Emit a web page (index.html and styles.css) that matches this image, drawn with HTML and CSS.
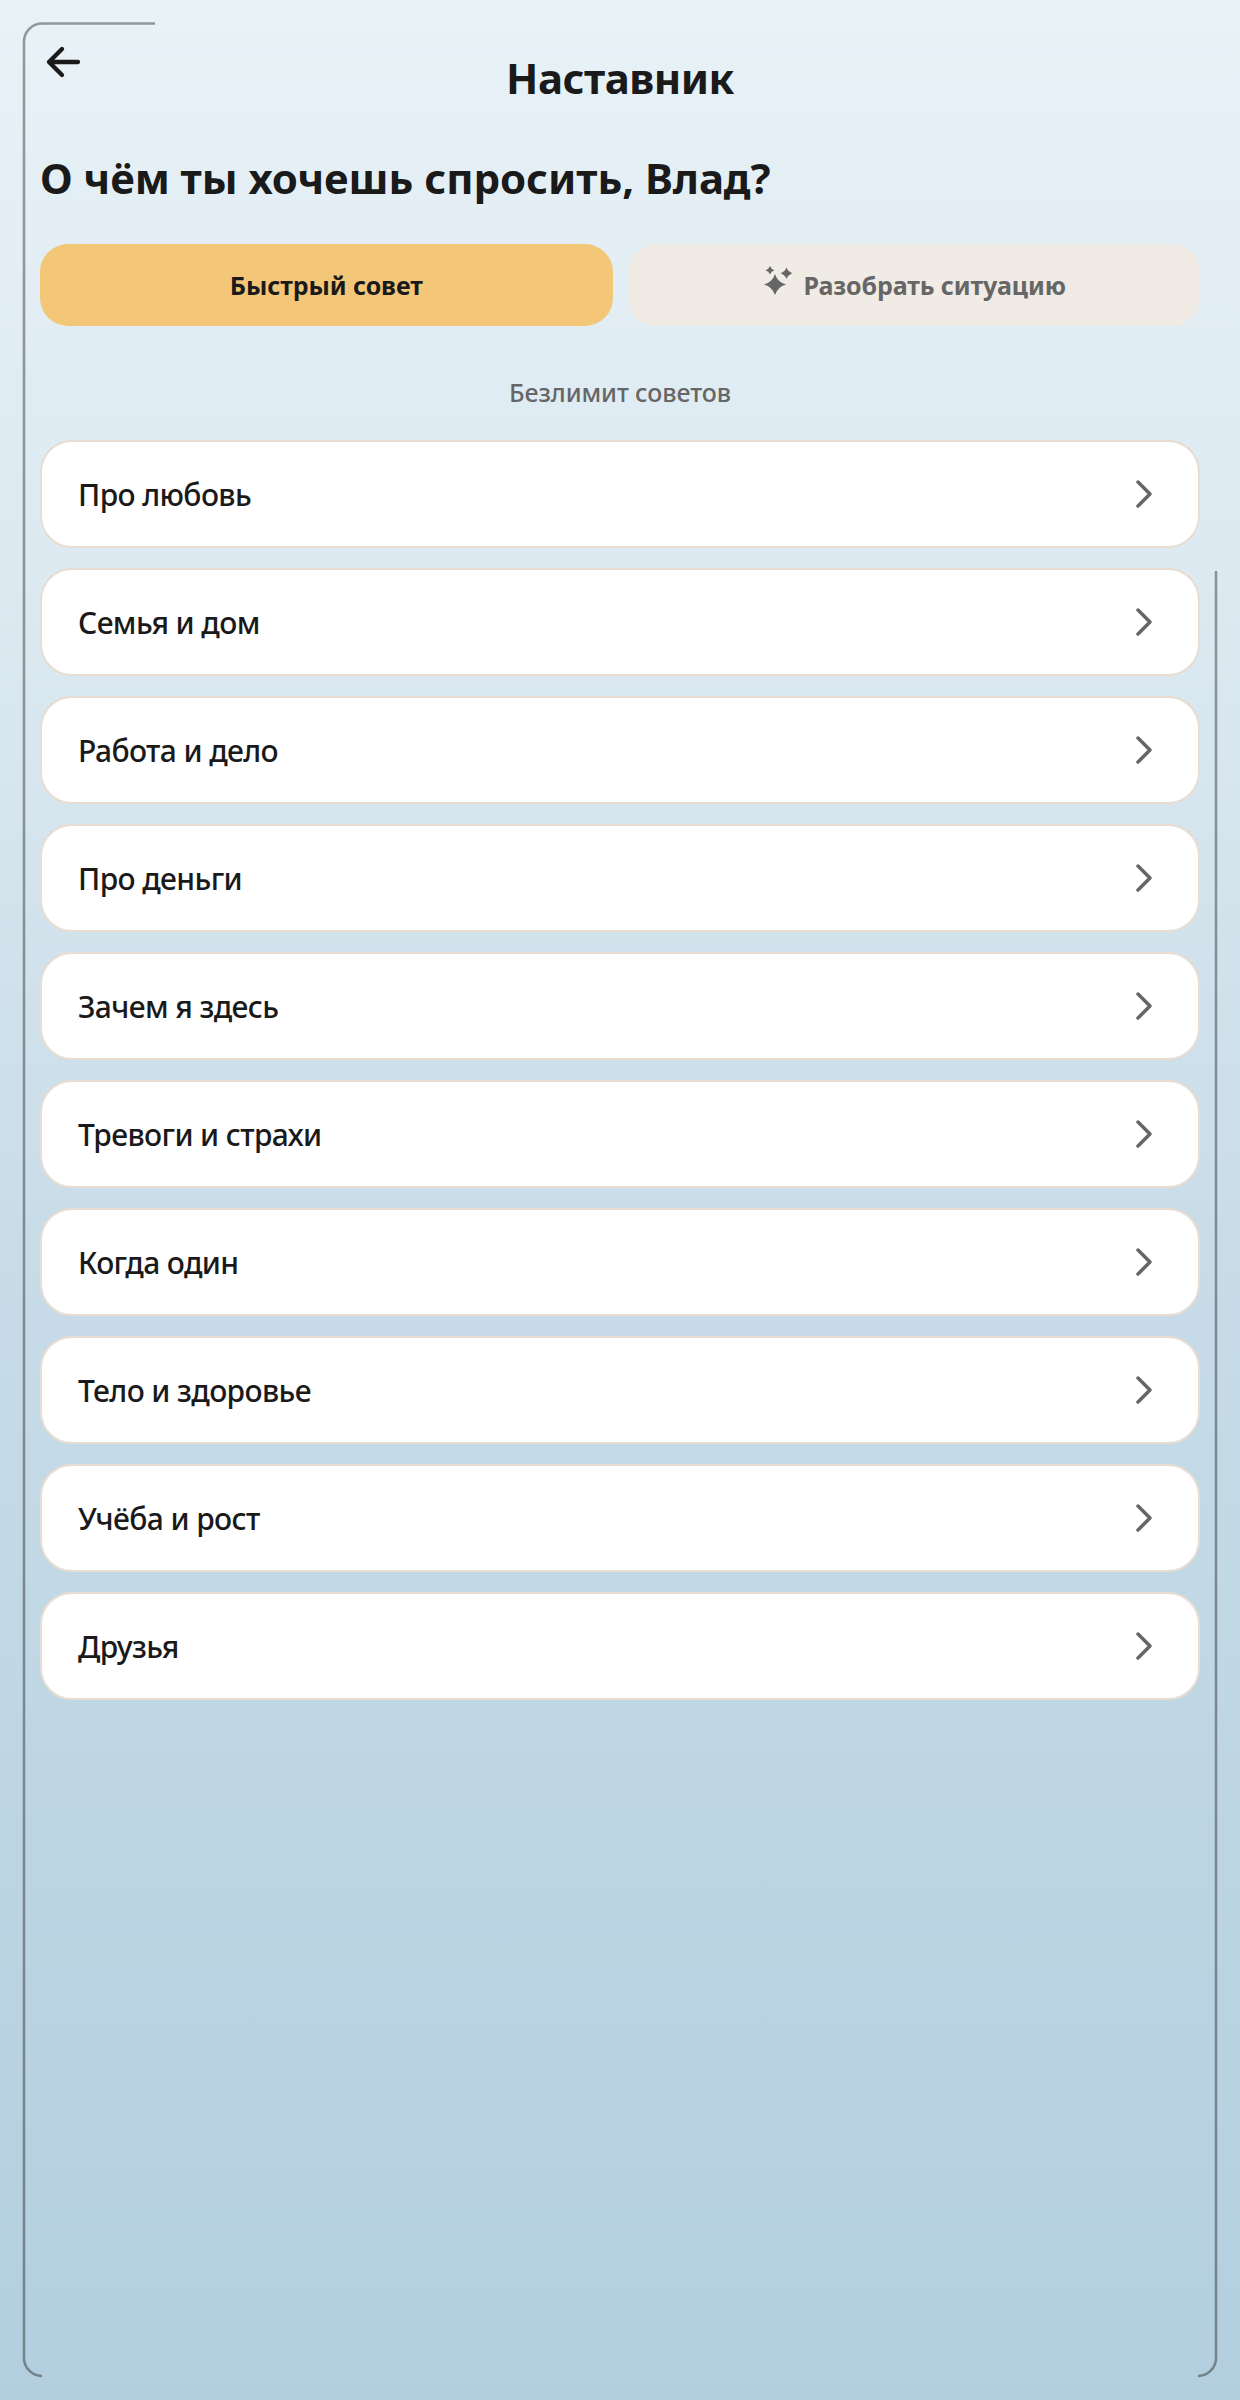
FILE: index.html
```html
<!DOCTYPE html>
<html lang="ru">
<head>
<meta charset="utf-8">
<title>Наставник</title>
<link rel="stylesheet" href="styles.css">
</head>
<body>
<svg class="frame" width="1240" height="2400" viewBox="0 0 1240 2400" fill="none">
  <path d="M155 23.500H42A18 18 0 0 0 24 41.500V2358A18 18 0 0 0 42 2376" stroke="#1a1a1a" stroke-opacity=".42" stroke-width="2.500"/>
  <path d="M1216 571V2358A18 18 0 0 1 1198 2376" stroke="#1a1a1a" stroke-opacity=".42" stroke-width="2.500"/>
</svg>
<main class="screen">
  <header class="topbar">
    <button class="back" aria-label="Назад">
      <svg width="38" height="34" viewBox="0 0 38 34" fill="none" stroke="#1a1a1a" stroke-width="4.300" stroke-linecap="round" stroke-linejoin="round"><path d="M35 17H6M19 4 6 17l13 13"/></svg>
    </button>
    <h1 class="title">Наставник</h1>
  </header>
  <h2 class="question">О чём ты хочешь спросить, Влад?</h2>
  <div class="tabs">
    <button class="tab tab-active">Быстрый совет</button>
    <button class="tab tab-idle">
      <svg width="32" height="32" viewBox="0 0 32 32" fill="#666"><path d="M13 8Q15.500 16 24 18.500Q15.500 21 13 29Q10.500 21 2 18.500Q10.500 16 13 8Z"/><path d="M24.500 1.500Q26 5.800 30.500 7.300Q26 8.800 24.500 13.100Q23 8.800 18.500 7.300Q23 5.800 24.500 1.500Z"/><path d="M8 0Q9.100 3.100 12.500 4.200Q9.100 5.300 8 8.400Q6.900 5.300 3.500 4.200Q6.900 3.100 8 0Z"/></svg>
      <span>Разобрать ситуацию</span>
    </button>
  </div>
  <p class="note">Безлимит советов</p>
  <ul class="topics">
    <li class="topic"><span>Про любовь</span><svg class="chev" width="18" height="28" viewBox="0 0 18 28" fill="none"><path d="M3 2l12 12L3 26"/></svg></li>
    <li class="topic"><span>Семья и дом</span><svg class="chev" width="18" height="28" viewBox="0 0 18 28" fill="none"><path d="M3 2l12 12L3 26"/></svg></li>
    <li class="topic"><span>Работа и дело</span><svg class="chev" width="18" height="28" viewBox="0 0 18 28" fill="none"><path d="M3 2l12 12L3 26"/></svg></li>
    <li class="topic"><span>Про деньги</span><svg class="chev" width="18" height="28" viewBox="0 0 18 28" fill="none"><path d="M3 2l12 12L3 26"/></svg></li>
    <li class="topic"><span>Зачем я здесь</span><svg class="chev" width="18" height="28" viewBox="0 0 18 28" fill="none"><path d="M3 2l12 12L3 26"/></svg></li>
    <li class="topic"><span>Тревоги и страхи</span><svg class="chev" width="18" height="28" viewBox="0 0 18 28" fill="none"><path d="M3 2l12 12L3 26"/></svg></li>
    <li class="topic"><span>Когда один</span><svg class="chev" width="18" height="28" viewBox="0 0 18 28" fill="none"><path d="M3 2l12 12L3 26"/></svg></li>
    <li class="topic"><span>Тело и здоровье</span><svg class="chev" width="18" height="28" viewBox="0 0 18 28" fill="none"><path d="M3 2l12 12L3 26"/></svg></li>
    <li class="topic"><span>Учёба и рост</span><svg class="chev" width="18" height="28" viewBox="0 0 18 28" fill="none"><path d="M3 2l12 12L3 26"/></svg></li>
    <li class="topic"><span>Друзья</span><svg class="chev" width="18" height="28" viewBox="0 0 18 28" fill="none"><path d="M3 2l12 12L3 26"/></svg></li>
  </ul>
</main>
</body>
</html>
```
FILE: styles.css
```css
* { box-sizing: border-box; }
html, body { margin: 0; height: 2400px; }
body {
  position: relative;
  overflow: hidden;
  background: linear-gradient(180deg, #e8f2f7 0%, #dce9f1 25%, #c6dbe7 55%, #b3cfdf 100%);
  font-family: "Noto Sans", sans-serif;
  color: #1a1a1a;
}
.frame { position: absolute; left: 0; top: 0; pointer-events: none; }
.screen { padding: 40px 40px 0; display: flex; flex-direction: column; }
.topbar { position: relative; height: 76px; display: flex; justify-content: center; align-items: center; }
.back {
  position: absolute; left: 3px; top: 5px;
  padding: 0; border: 0; background: none; display: flex;
}
.title { margin: 0; font-size: 42px; line-height: 76px; font-weight: 700; letter-spacing: -0.5px; }
.question { margin: 33px 0 0; font-size: 42px; line-height: 58px; font-weight: 700; letter-spacing: -0.05px; }
.tabs { margin-top: 37px; display: flex; gap: 15px; }
.tab {
  flex: 1 1 0; height: 82px; border: 0; border-radius: 28px;
  font: 700 25px "Noto Sans", sans-serif; letter-spacing: -0.1px;
  display: flex; align-items: center; justify-content: center; gap: 10px;
}
.tab-active { background: #f4c778; color: #1a1a1a; }
.tab-idle { background: #f0ebe4; color: #666; }
.tab-idle svg { margin-bottom: 6px; }
.note { margin: 48px 0 0; text-align: center; font-size: 25px; line-height: 36px; color: #666; font-weight: 500; letter-spacing: -0.1px; }
.topics { list-style: none; margin: 30px 0 0; padding: 0; display: flex; flex-direction: column; gap: 20px; }
.topic {
  height: 108px; padding: 0 45px 0 36px; background: #fff;
  border: 2px solid #e8ddd2; border-radius: 32px;
  display: flex; align-items: center; justify-content: space-between;
  font-size: 30px; font-weight: 500; letter-spacing: -0.6px;
}
.chev path { stroke: #666; stroke-width: 3.500; stroke-linecap: round; stroke-linejoin: round; }
```
